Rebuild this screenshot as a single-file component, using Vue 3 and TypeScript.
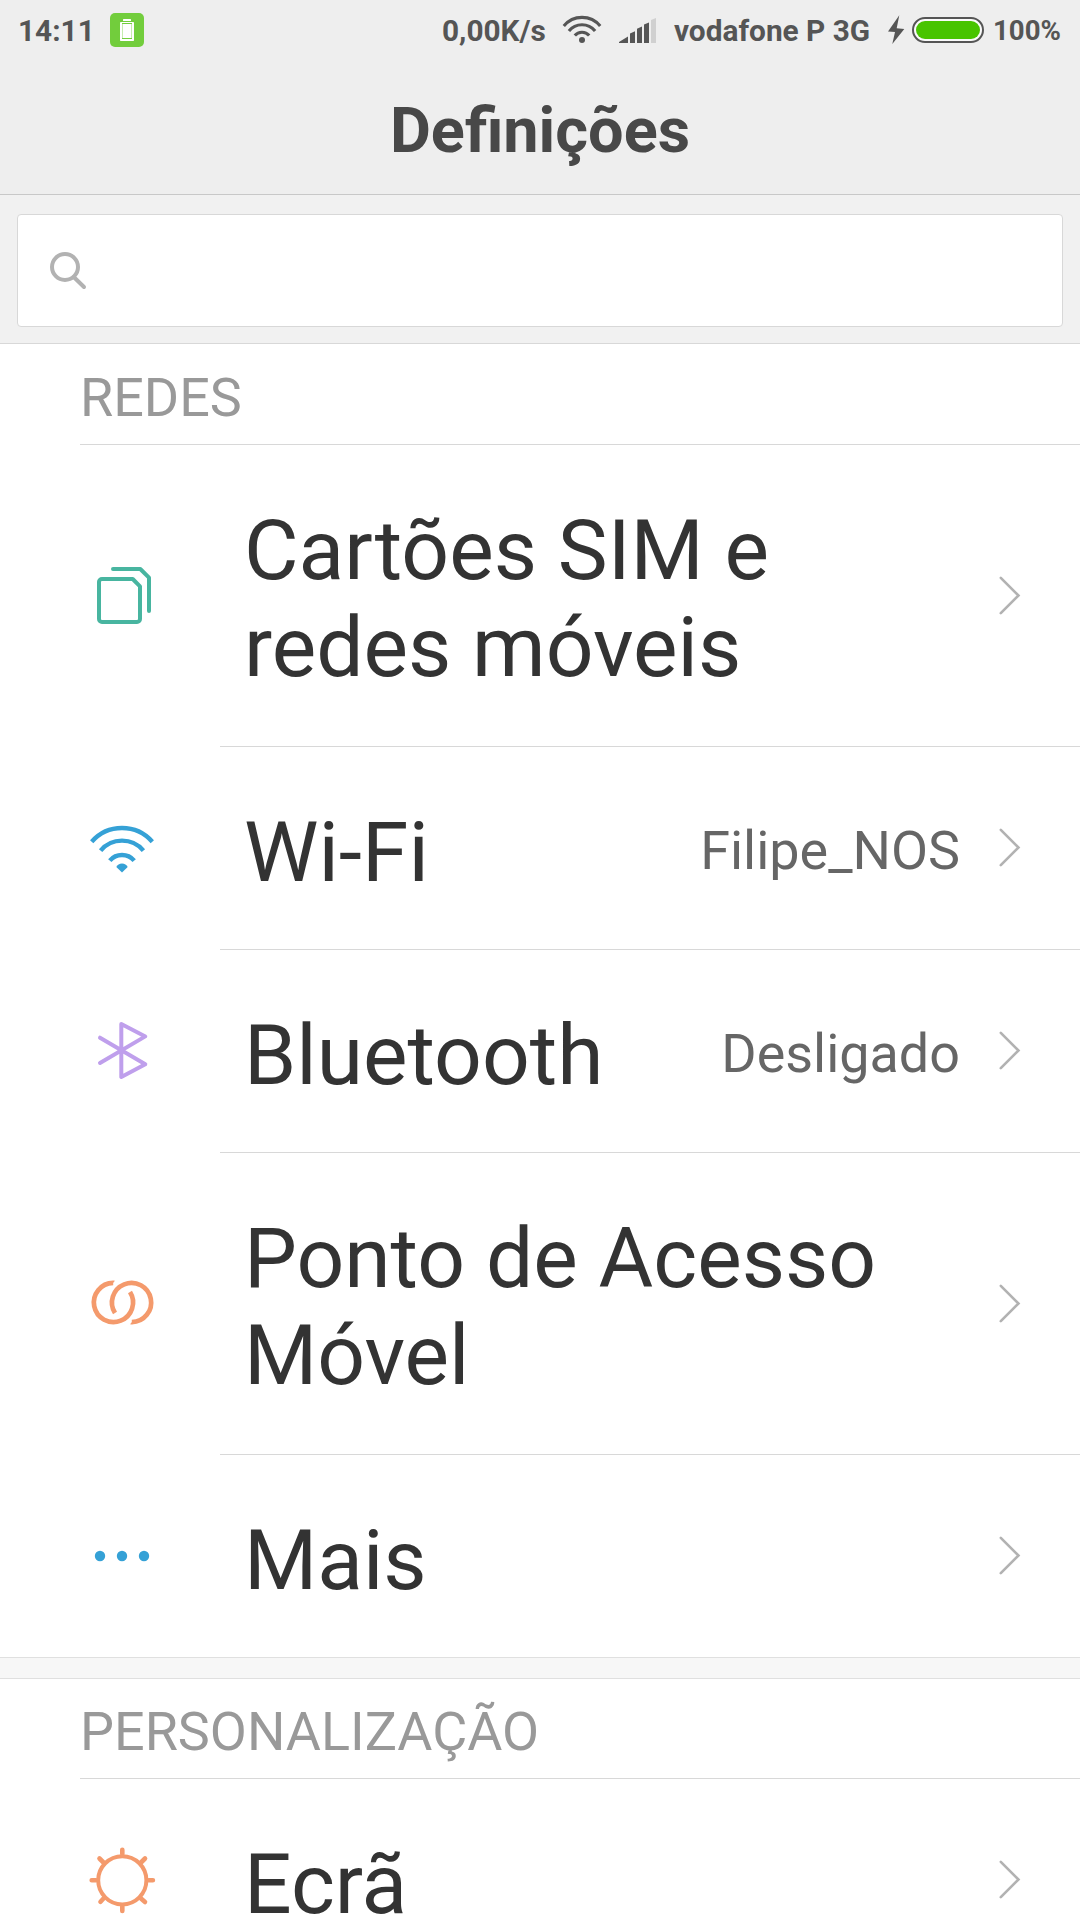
<script setup lang="ts">
type IconName = 'sim' | 'wifi' | 'bluetooth' | 'hotspot' | 'more' | 'display'

interface SettingItem {
  icon: IconName
  lines: string[]
  value?: string
}

interface SettingSection {
  title: string
  items: SettingItem[]
}

const sections: SettingSection[] = [
  {
    title: 'REDES',
    items: [
      { icon: 'sim', lines: ['Cartões SIM e', 'redes móveis'] },
      { icon: 'wifi', lines: ['Wi-Fi'], value: 'Filipe_NOS' },
      { icon: 'bluetooth', lines: ['Bluetooth'], value: 'Desligado' },
      { icon: 'hotspot', lines: ['Ponto de Acesso', 'Móvel'] },
      { icon: 'more', lines: ['Mais'] },
    ],
  },
  {
    title: 'PERSONALIZAÇÃO',
    items: [{ icon: 'display', lines: ['Ecrã'] }],
  },
]
</script>

<template>
  <div class="screen">
    <header class="header">
      <div class="status">
        <span class="clock">14:11</span>
        <svg class="notif" width="34" height="34" viewBox="0 0 34 34">
          <rect width="34" height="34" rx="5" fill="#72cd3c" />
          <rect x="13" y="6" width="8" height="2" rx="0.6" fill="#fff" />
          <rect x="10" y="9" width="14" height="19" rx="0.8" fill="#fff" />
          <path d="M12 10.5H22M12 25.5H22" stroke="#72cd3c" stroke-width="1" />
          <path d="M12.5 11V25M21.5 11V25" stroke="#c6ebb0" stroke-width="1" />
        </svg>
        <span class="speed">0,00K/s</span>
        <svg class="s-wifi" width="44" height="32" viewBox="0 0 44 32" fill="none" stroke="#555" stroke-width="3.1">
          <path d="M3.8 12A23.5 23.5 0 0 1 40.2 12" />
          <path d="M8.9 16.9A17 17 0 0 1 35.1 16.9" />
          <path d="M14.8 21.6A9.3 9.3 0 0 1 29.2 21.6" />
          <circle cx="22" cy="26" r="3" fill="#555" stroke="none" />
        </svg>
        <svg class="s-signal" width="42" height="32" viewBox="0 0 42 32" fill="#555">
          <path d="M2 29V28L11 22.5V29ZM13 29V19.5L18 17.2V29ZM20 29V14.7L25 12.5V29ZM27 29V10.5L32 8.5V29Z" />
          <path d="M34 29V6L39 4V29Z" fill="#d0d0d0" />
        </svg>
        <span class="carrier">vodafone P 3G</span>
        <svg class="s-bolt" width="20" height="32" viewBox="0 0 20 32">
          <path d="M13.3 1.3L2 17.6L9 18L6.3 30L18.3 15L10.7 14.3Z" fill="#555" />
        </svg>
        <div class="battery"><div class="battery-level"></div></div>
        <span class="percent">100%</span>
      </div>
      <h1 class="title">Definições</h1>
    </header>

    <div class="search">
      <div class="search-box">
        <svg width="40" height="40" viewBox="0 0 40 40" fill="none" stroke="#b2b2b2" stroke-width="4">
          <circle cx="17" cy="17" r="13" />
          <path d="M26 27.2L36 37" stroke-linecap="round" />
        </svg>
      </div>
    </div>

    <section v-for="section in sections" :key="section.title" class="section">
      <h2 class="section-title">{{ section.title }}</h2>
      <div
        v-for="item in section.items"
        :key="item.icon"
        class="row"
        :class="{ tall: item.lines.length > 1 }"
      >
        <svg class="icon" width="80" height="80" viewBox="0 0 80 80" fill="none" stroke-width="4" stroke-linecap="round" stroke-linejoin="round">
          <g v-if="item.icon === 'sim'" stroke="#48b5a0">
            <path d="M20 24H50.7L58 31.3V64A3 3 0 0 1 55 67H20A3 3 0 0 1 17 64V27A3 3 0 0 1 20 24Z" />
            <path d="M31 14H58.3L67 22.7V56" />
          </g>
          <g v-else-if="item.icon === 'wifi'" stroke="#35a1d6" stroke-width="4.4" stroke-linecap="butt">
            <path d="M9.7 33.8A40.3 40.3 0 0 1 70.3 33.8" />
            <path d="M18.6 42.6A28 28 0 0 1 61.4 42.6" />
            <path d="M27.8 52.6A16 16 0 0 1 52.2 52.6" />
            <path d="M34.3 59Q36 55.4 40 55.4T45.7 59L40 64.6Z" fill="#35a1d6" stroke="none" />
          </g>
          <g v-else-if="item.icon === 'bluetooth'" stroke="#bf9fec">
            <path d="M18 26.7L63.3 53.3L39.3 66V12.9L63.3 25.4L18 52" />
          </g>
          <g v-else-if="item.icon === 'hotspot'" stroke="#f49a6c" stroke-width="4.7" stroke-linecap="butt">
            <path d="M31.2 19.9A19.6 19.6 0 1 0 48 29" />
            <path d="M49.8 59.1A19.6 19.6 0 1 0 33 50" />
            <path d="M31 17.6L33 17.8L29 22.2ZM50 61.4L48 61.2L52 56.8Z" fill="#f49a6c" stroke="none" />
          </g>
          <g v-else-if="item.icon === 'more'" fill="#35a1d6">
            <circle cx="18" cy="40" r="5.2" />
            <circle cx="40" cy="40" r="5.2" />
            <circle cx="62" cy="40" r="5.2" />
          </g>
          <g v-else stroke="#f49a6c">
            <circle cx="40.3" cy="40.3" r="24.1" />
            <path d="M40.3 14V9.7M40.3 66.6V70.9M14 40.3H9.7M66.6 40.3H70.9M21.5 22.5L17.5 18.5M59 22.5L63 18.5M21.5 58.5L18.5 61.7M59 58.5L63 62" stroke-width="4.6" />
          </g>
        </svg>
        <div class="content">
          <div class="label"><div v-for="line in item.lines" :key="line">{{ line }}</div></div>
          <span v-if="item.value" class="value">{{ item.value }}</span>
          <svg class="chevron" width="24" height="42" viewBox="0 0 24 42" fill="none" stroke="#b2b2b2" stroke-width="2.6" stroke-linecap="round">
            <path d="M2.8 2.8L20.5 20.5L2.8 38.2" />
          </svg>
        </div>
      </div>
    </section>
  </div>
</template>

<style>
body {
  background: #fff;
}
</style>

<style scoped>
.screen {
  width: 1080px;
  height: 1920px;
  overflow: hidden;
  background: #f7f7f7;
  font-family: Roboto, "Liberation Sans", sans-serif;
  white-space: nowrap;
}
.header {
  box-sizing: border-box;
  height: 195px;
  background: #eee;
  border-bottom: 1px solid #c8c8c8;
}
.status {
  display: flex;
  align-items: center;
  height: 60px;
  color: #555;
  font-size: 29.8px;
  font-weight: 700;
}
.clock {
  width: 92px;
  padding-left: 18px;
}
.speed {
  width: 118px;
  margin-left: 298px;
}
.s-wifi {
  margin-right: 13px;
}
.s-signal {
  margin-right: 15px;
}
.carrier {
  width: 212px;
}
.battery {
  box-sizing: border-box;
  width: 72px;
  height: 26px;
  margin: 0 9px 0 6px;
  padding: 2px;
  border: 2px solid #555;
  border-radius: 13px;
  background: #fafafa;
}
.battery-level {
  height: 100%;
  border-radius: 9px;
  background: #48c400;
}
.percent {
  font-size: 27.6px;
}
.title {
  margin: 31px 0 0;
  color: #484848;
  font-size: 63px;
  line-height: 80px;
  font-weight: 700;
  text-align: center;
}
.search {
  box-sizing: border-box;
  height: 149px;
  padding: 19px 17px 0;
  background: #f1f1f1;
  border-bottom: 1px solid #d8d8d8;
}
.search-box {
  box-sizing: border-box;
  height: 113px;
  padding: 35px 0 0 30px;
  border: 1px solid #d8d8d8;
  border-radius: 4px;
  background: #fff;
}
.section {
  background: #fff;
}
.section + .section {
  margin-top: 20px;
  border-top: 1px solid #e0e0e0;
}
.section-title {
  box-sizing: border-box;
  height: 101px;
  margin: 0 0 0 80px;
  padding-top: 4px;
  border-bottom: 1px solid #d8d8d8;
  color: #999;
  font-size: 53.9px;
  line-height: 100px;
  font-weight: 400;
}
.section + .section .section-title {
  height: 100px;
  padding-top: 3px;
}
.row {
  display: flex;
  align-items: center;
  height: 203px;
}
.row.tall {
  height: 302px;
}
.icon {
  margin: 0 58px 1px 82px;
}
.tall .icon {
  margin-bottom: 2px;
}
.content {
  box-sizing: border-box;
  display: flex;
  flex: 1;
  align-items: center;
  align-self: stretch;
  padding: 0 58px 0 24px;
  border-bottom: 1px solid #d8d8d8;
}
.row:last-child .content {
  border-bottom-color: transparent;
}
.row:last-child {
  box-shadow: inset 0 -1px #e0e0e0;
}
.label {
  flex: 1;
  padding-top: 8px;
  color: #333;
  font-size: 83.92px;
  line-height: 97px;
}
.tall .label {
  padding-top: 7px;
}
.value {
  padding-top: 5px;
  color: #666;
  font-size: 53.9px;
}
.chevron {
  margin-left: 38px;
}
</style>
